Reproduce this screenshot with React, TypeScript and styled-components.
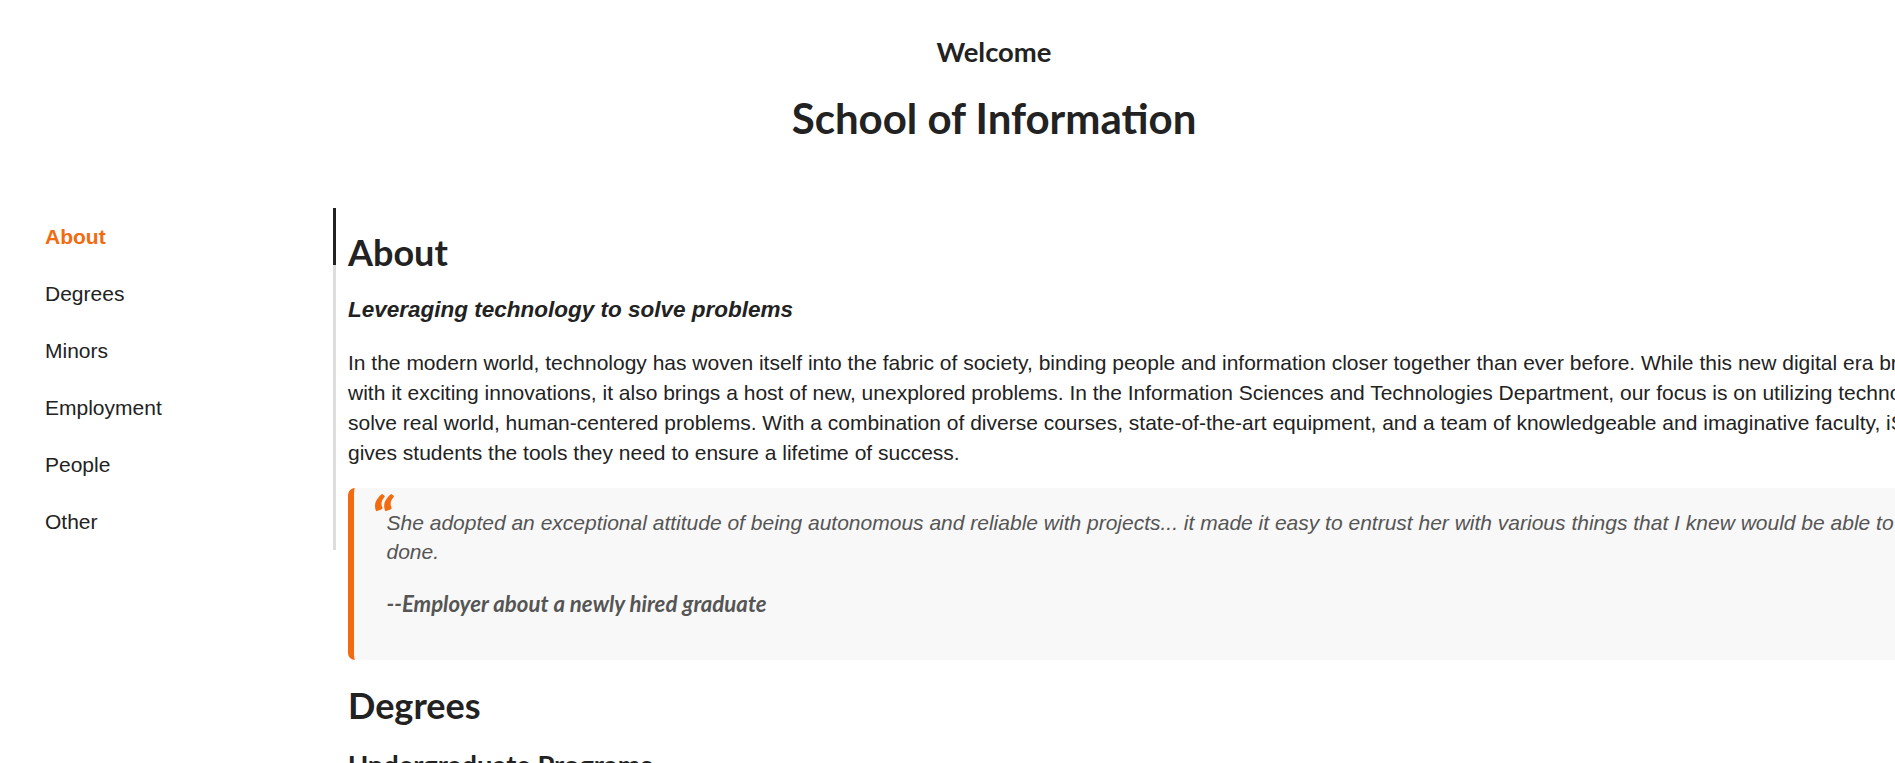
import React from "react";
import styled, { createGlobalStyle } from "styled-components";

const ORANGE = "#f26b10";
const INK = "#222222";

const GlobalStyle = createGlobalStyle`
  html, body {
    margin: 0;
    padding: 0;
    overflow: hidden;
    background: #ffffff;
  }
  body {
    font-family: "Liberation Sans", Arial, sans-serif;
    color: ${INK};
  }
`;

const Page = styled.div`
  min-width: 1988px;
  width: 1988px;
`;

const Header = styled.header`
  text-align: center;
  padding: 36px 0 65px;
  font-family: Lato, "Liberation Sans", sans-serif;
`;

const Welcome = styled.h2`
  margin: 0;
  font-size: 27.4px;
  line-height: 1.2;
  font-weight: 700;
  color: ${INK};
`;

const Title = styled.h1`
  margin: 24px 0 0;
  font-size: 42px;
  line-height: 1.2;
  font-weight: 700;
  color: ${INK};
`;

const Layout = styled.div`
  display: grid;
  grid-template-columns: 336px 1fr;
  column-gap: 12px;
  padding-right: 18px;
  align-items: start;
`;

const SideNav = styled.ul`
  list-style: none;
  margin: 0;
  padding: 0;
`;

const NavItem = styled.li<{ $active?: boolean }>`
  height: 57px;
  display: flex;
  align-items: center;
  padding-left: 45px;
  border-right: 3px solid ${(p) => (p.$active ? INK : "#dddddd")};
  font-size: 21px;
  font-weight: ${(p) => (p.$active ? 700 : 400)};
  color: ${(p) => (p.$active ? ORANGE : INK)};
  cursor: pointer;
`;

const Main = styled.main`
  min-width: 0;
`;

const Section = styled.section`
  display: flex;
  flex-direction: column;
`;

const SectionTitle = styled.h2<{ $gap: number }>`
  margin: ${(p) => p.$gap}px 0 0;
  font-family: Lato, "Liberation Sans", sans-serif;
  font-size: 36px;
  line-height: 1.2;
  font-weight: 700;
  color: ${INK};
`;

const Tagline = styled.h3`
  margin: 22px 0 0;
  font-size: 22.5px;
  line-height: 1.2;
  font-style: italic;
  font-weight: 700;
  color: ${INK};
`;

const Paragraph = styled.p`
  margin: 24.5px 0 0;
  font-size: 21px;
  line-height: 30.16px;
  color: ${INK};
`;

const Quote = styled.blockquote`
  position: relative;
  margin: 19.4px 0 0;
  padding: 20.5px 32.5px 42.5px;
  background: #f8f8f8;
  border-left: 6px solid ${ORANGE};
  border-radius: 7px 0 0 7px;

  &::before {
    content: "\\201C";
    position: absolute;
    left: 17px;
    top: 0px;
    font-family: Lato, "Liberation Sans", sans-serif;
    font-size: 58px;
    font-style: italic;
    font-weight: 900;
    line-height: 58px;
    color: ${ORANGE};
  }
`;

const QuoteText = styled.p`
  margin: 0;
  font-size: 21px;
  line-height: 29px;
  font-style: italic;
  color: #555555;
`;

const Attribution = styled.p`
  margin: 24.4px 0 0;
  font-family: Lato, "Liberation Sans", sans-serif;
  font-size: 22.2px;
  line-height: 1.2;
  font-style: italic;
  font-weight: 700;
  color: #555555;
`;

const SubTitle = styled.h3`
  margin: 21px 0 0;
  font-family: Lato, "Liberation Sans", sans-serif;
  font-size: 27.3px;
  line-height: 1.2;
  font-weight: 700;
  color: ${INK};
`;

const navItems = ["About", "Degrees", "Minors", "Employment", "People", "Other"];

export default function App() {
  return (
    <Page>
      <GlobalStyle />
      <Header>
        <Welcome>Welcome</Welcome>
        <Title>School of Information</Title>
      </Header>
      <Layout>
        <SideNav>
          {navItems.map((item, i) => (
            <NavItem key={item} $active={i === 0}>
              {item}
            </NavItem>
          ))}
        </SideNav>
        <Main>
          <Section id="about">
            <SectionTitle $gap={23}>About</SectionTitle>
            <Tagline>Leveraging technology to solve problems</Tagline>
            <Paragraph>
              In the modern world, technology has woven itself into the fabric of society, binding people and
              information closer together than ever before. While this new digital era brings with it exciting
              innovations, it also brings a host of new, unexplored problems. In the Information Sciences and
              Technologies Department, our focus is on utilizing technology to solve real world, human-centered
              problems. With a combination of diverse courses, state-of-the-art equipment, and a team of
              knowledgeable and imaginative faculty, iSchool gives students the tools they need to ensure a
              lifetime of success.
            </Paragraph>
            <Quote>
              <QuoteText>
                She adopted an exceptional attitude of being autonomous and reliable with projects... it made it
                easy to entrust her with various things that I knew would be able to get done.
              </QuoteText>
              <Attribution>--Employer about a newly hired graduate</Attribution>
            </Quote>
          </Section>
          <Section id="degrees">
            <SectionTitle $gap={24.4}>Degrees</SectionTitle>
            <SubTitle>Undergraduate Programs</SubTitle>
          </Section>
        </Main>
      </Layout>
    </Page>
  );
}
